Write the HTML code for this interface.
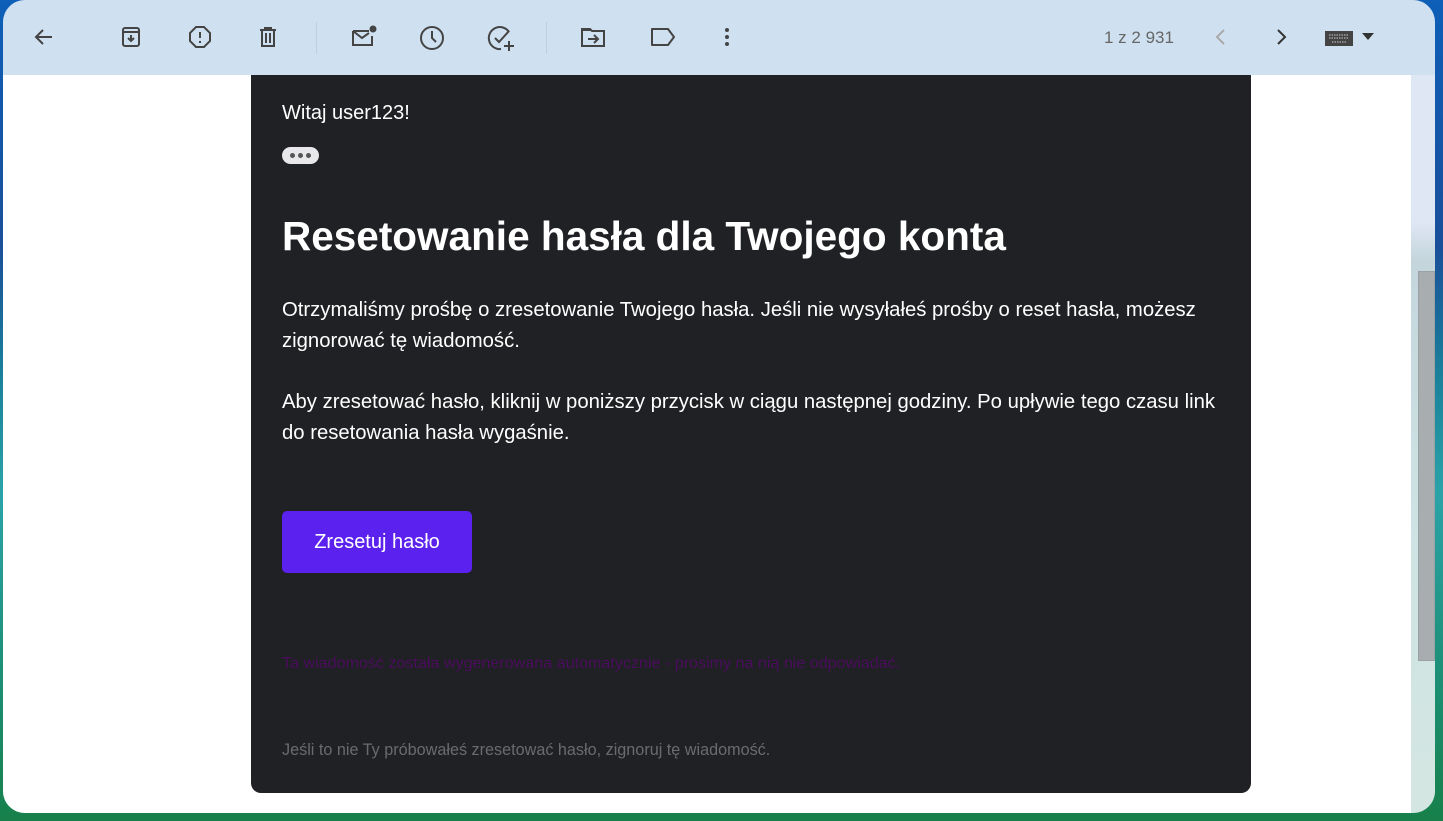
<!DOCTYPE html>
<html><head><meta charset="utf-8"><style>
*{margin:0;padding:0;box-sizing:border-box}
body{width:1443px;height:821px;overflow:hidden;position:relative;font-family:"Liberation Sans",Arial,sans-serif;background:linear-gradient(180deg,#0d5fb8 0%,#1a4f9a 30%,#1a7f9a 45%,#2aa3a8 60%,#1b8d70 85%,#17804a 100%)}
.win{position:absolute;left:3px;top:0;width:1432px;height:813px;background:#cfe1f0;border-radius:22px;overflow:hidden}
.content{position:absolute;left:0;top:75px;width:1408px;height:738px;background:#fff}
.track{position:absolute;left:1408px;top:75px;width:24px;height:738px;background:linear-gradient(180deg,#dfe6f4 0%,#dfe6f4 20%,#c4d6dc 25%,#cde3e3 60%,#d4e6e2 100%)}
.thumb{position:absolute;left:1415px;top:271px;width:17px;height:390px;background:#a8adb0;border:1px solid #9aa0a3}
.card{position:absolute;left:248px;top:75px;width:1000px;height:718px;background:#202124;border-radius:0 0 10px 10px;color:#fff}
.tb svg{position:absolute;top:25px}
.sep{position:absolute;top:22px;width:1px;height:32px;background:#bcd0e0}
p{font-size:20.3px;line-height:31px}
</style></head><body>
<div class="win">
<div class="content"></div>
<div class="track"></div>
<div class="thumb"></div>
<div class="tb">
<svg style="left:29px" width="24" height="24" viewBox="0 0 24 24"><path d="M20 12H5M11 5l-7 7 7 7" fill="none" stroke="#444" stroke-width="2"/></svg>
<svg style="left:116px" width="24" height="24" viewBox="0 0 24 24"><rect x="4" y="3" width="16" height="18" rx="2" fill="none" stroke="#444" stroke-width="2"/><path d="M4 7h16M12 10v6M9 13l3 3 3-3" fill="none" stroke="#444" stroke-width="2"/></svg>
<svg style="left:185px" width="24" height="24" viewBox="0 0 24 24"><path d="M8 2h8l6 6v8l-6 6H8l-6-6V8z" fill="none" stroke="#444" stroke-width="2"/><path d="M12 7v6M12 16v2" stroke="#444" stroke-width="2"/></svg>
<svg style="left:253px" width="24" height="24" viewBox="0 0 24 24"><path d="M4 5h16M9 5V3h6v2M6 5v16h12V5M10 8v10M14 8v10" fill="none" stroke="#444" stroke-width="2"/></svg>
<div class="sep" style="left:313px"></div>
<svg style="left:347px" width="28" height="24" viewBox="0 0 28 24"><path d="M3 6h16M3 6v14h19V11M3 6l9 7 7-5" fill="none" stroke="#444" stroke-width="2"/><circle cx="23" cy="4" r="3.5" fill="#444"/></svg>
<svg style="left:416px" width="26" height="26" viewBox="0 0 26 26"><circle cx="13" cy="13" r="11" fill="none" stroke="#444" stroke-width="2"/><path d="M13 6v7l4 4" fill="none" stroke="#444" stroke-width="2"/></svg>
<svg style="left:484px" width="30" height="28" viewBox="0 0 30 28"><path d="M22 7A11 11 0 1 0 14 24" fill="none" stroke="#444" stroke-width="2"/><path d="M8 13l4 4 10-11M22 16v10M17 21h10" fill="none" stroke="#444" stroke-width="2"/></svg>
<div class="sep" style="left:543px"></div>
<svg style="left:577px" width="26" height="24" viewBox="0 0 26 24"><path d="M2 4h8l2 2h12v15H2z" fill="none" stroke="#444" stroke-width="2"/><path d="M2 4h8l2 2H2z" fill="#444"/><path d="M8 14h9M14 10l4 4-4 4" fill="none" stroke="#444" stroke-width="2"/></svg>
<svg style="left:646px" width="28" height="24" viewBox="0 0 28 24"><path d="M3 4h16l6 8-6 8H3z" fill="none" stroke="#444" stroke-width="2" stroke-linejoin="round"/></svg>
<svg style="left:712px" width="24" height="24" viewBox="0 0 24 24"><circle cx="12" cy="5" r="2" fill="#444"/><circle cx="12" cy="12" r="2" fill="#444"/><circle cx="12" cy="19" r="2" fill="#444"/></svg>
<div style="position:absolute;left:1101px;top:28px;font-size:17px;color:#666">1 z 2 931</div>
<svg style="left:1206px" width="24" height="24" viewBox="0 0 24 24"><path d="M15 5l-7 7 7 7" fill="none" stroke="#aaa" stroke-width="2"/></svg>
<svg style="left:1266px" width="24" height="24" viewBox="0 0 24 24"><path d="M9 5l7 7-7 7" fill="none" stroke="#333" stroke-width="2"/></svg>
<svg style="left:1322px;top:31px" width="28" height="15" viewBox="0 0 28 15"><rect width="28" height="15" fill="#444"/><path d="M4 4h20M4 7h20M7 11h14" stroke="#ccc" stroke-width="1" stroke-dasharray="1.5 1"/></svg>
<svg style="left:1358px;top:33px" width="14" height="8" viewBox="0 0 14 8"><path d="M1 0h12L7 7z" fill="#333"/></svg>
</div>
<div class="card">
<div style="position:absolute;left:31px;top:27px;font-size:20px">Witaj user123!</div>
<div style="position:absolute;left:31px;top:72px;width:37px;height:17px;background:#e8e8ea;border-radius:9px;display:flex;align-items:center;justify-content:center;gap:3px"><i style="width:5px;height:5px;border-radius:50%;background:#555"></i><i style="width:5px;height:5px;border-radius:50%;background:#555"></i><i style="width:5px;height:5px;border-radius:50%;background:#555"></i></div>
<div style="position:absolute;left:31px;top:138px;font-size:40.5px;font-weight:bold">Resetowanie hasła dla Twojego konta</div>
<p style="position:absolute;left:31px;top:220px;width:950px">Otrzymaliśmy prośbę o zresetowanie Twojego hasła. Jeśli nie wysyłałeś prośby o reset hasła, możesz zignorować tę wiadomość.</p>
<p style="position:absolute;left:31px;top:312px;width:950px">Aby zresetować hasło, kliknij w poniższy przycisk w ciągu następnej godziny. Po upływie tego czasu link do resetowania hasła wygaśnie.</p>
<div style="position:absolute;left:31px;top:436px;width:190px;height:62px;background:#5b21ee;border-radius:5px;font-size:20px;line-height:62px;text-align:center">Zresetuj hasło</div>
<div style="position:absolute;left:31px;top:579px;font-size:16.1px;color:#4a0c5c">Ta wiadomość została wygenerowana automatycznie - prosimy na nią nie odpowiadać.</div>
<div style="position:absolute;left:31px;top:666px;font-size:16.2px;color:#6b6b6e">Jeśli to nie Ty próbowałeś zresetować hasło, zignoruj tę wiadomość.</div>
</div>
</div>
</body></html>
